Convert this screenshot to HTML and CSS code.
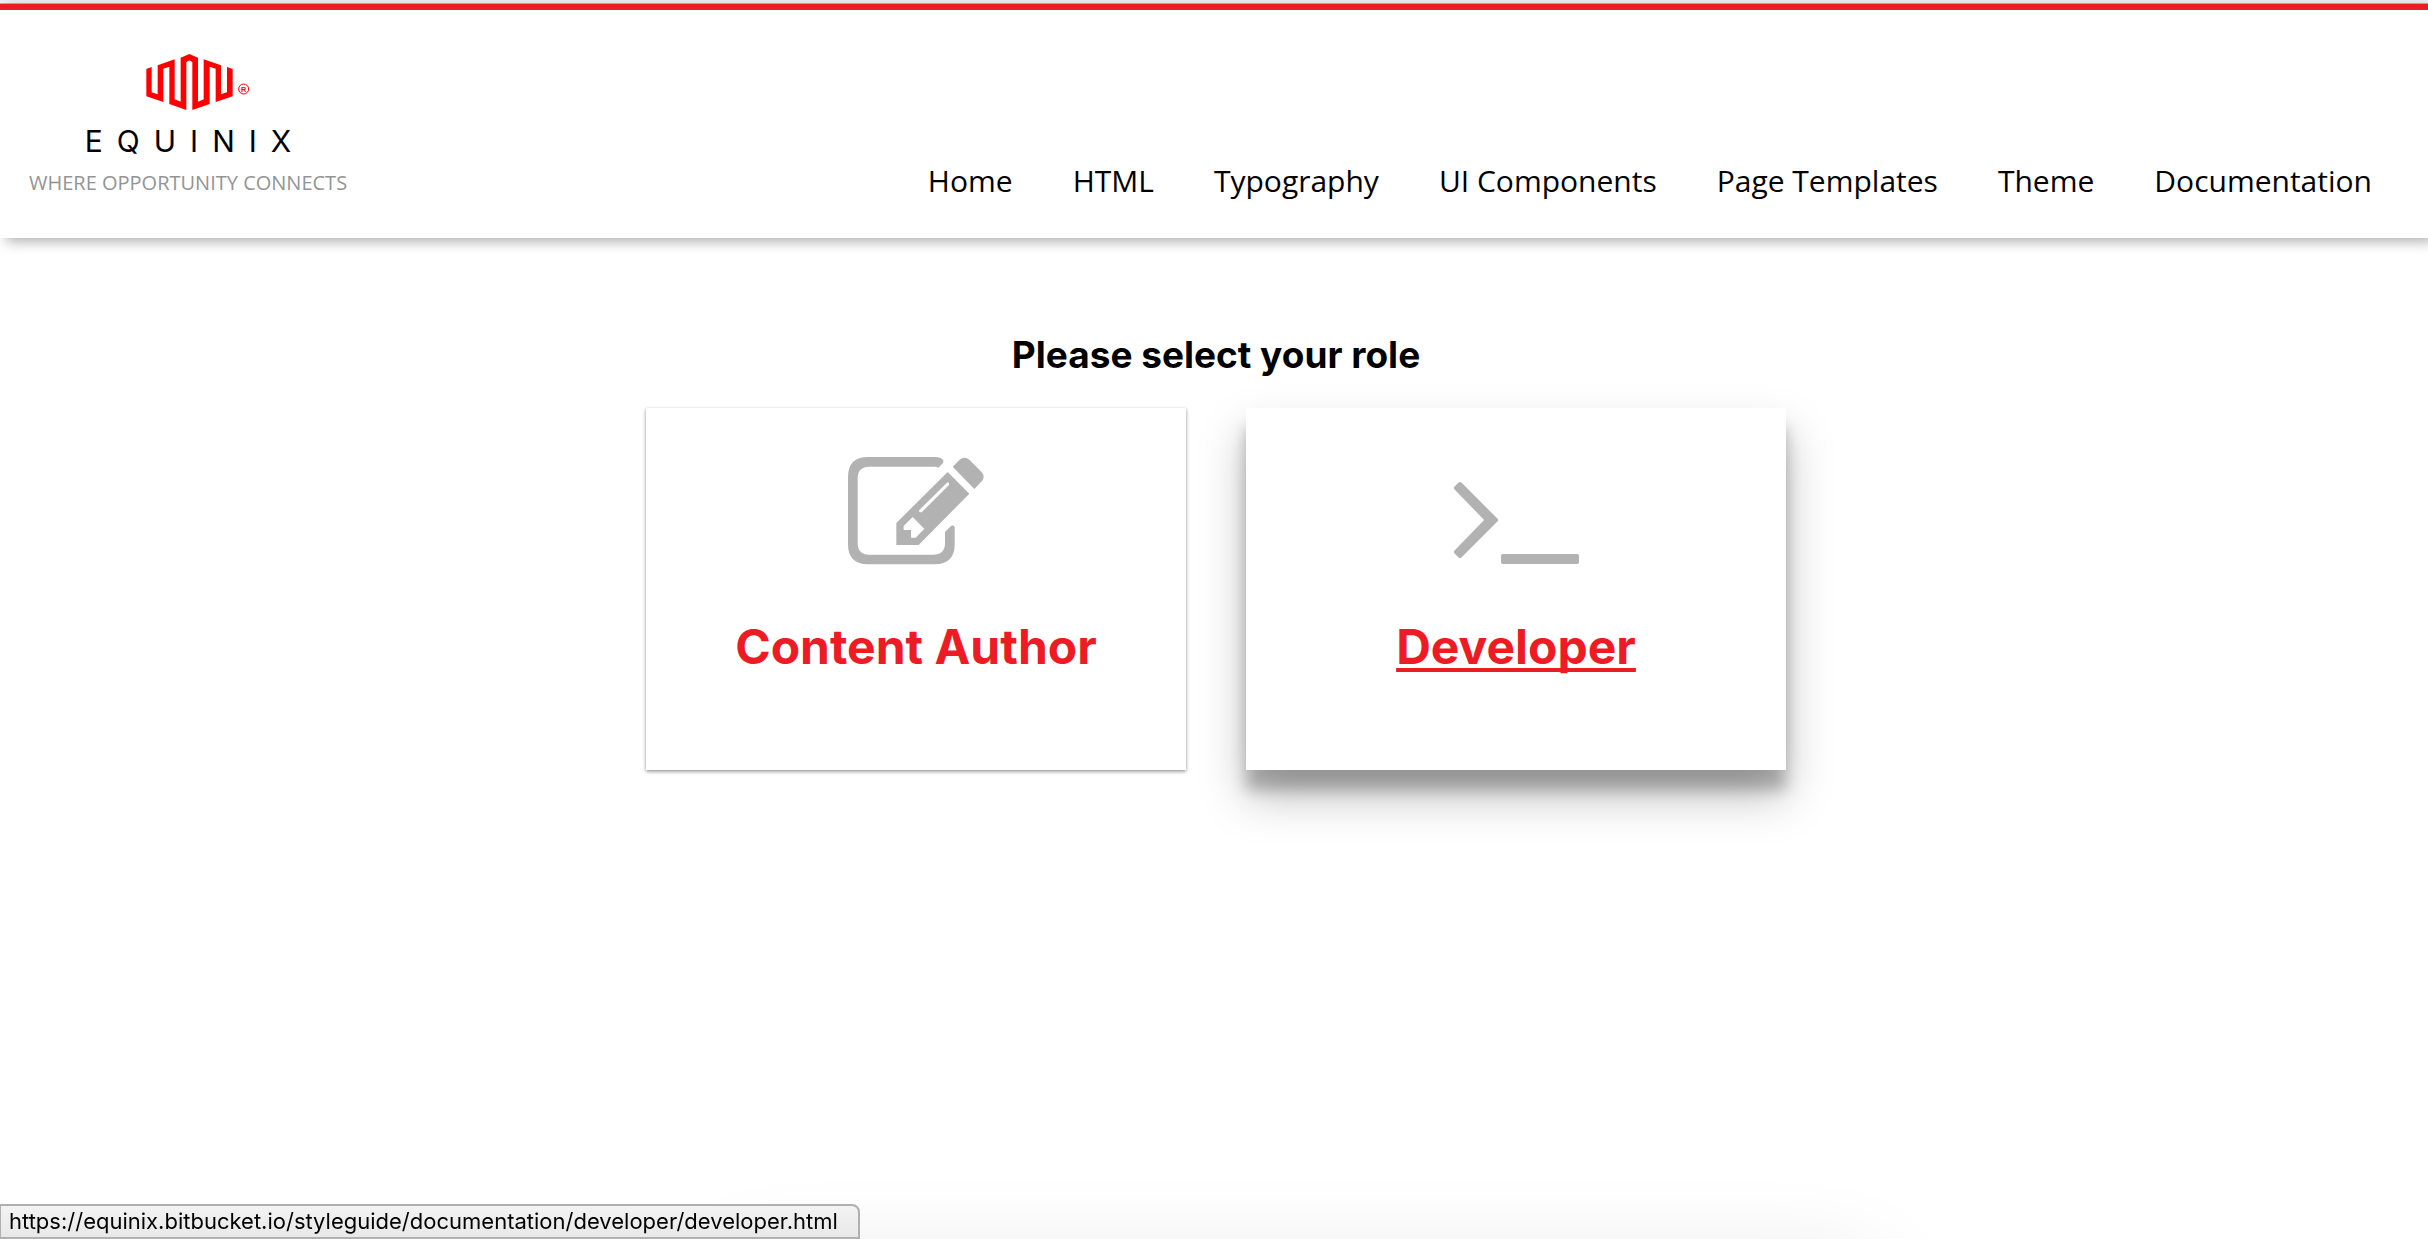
FILE: index.html
```html
<!DOCTYPE html>
<html lang="en">
<head>
<meta charset="utf-8">
<meta name="viewport" content="width=device-width, initial-scale=1">
<title>Equinix Style Guide</title>
<link rel="stylesheet" href="styles.css">
</head>
<body>
<div class="topline"></div>
<header class="header">
  <a class="brand" href="index.html">
    <svg class="brand-mark" viewBox="440 162 310 168" role="img" aria-label="Equinix logo">
      <path fill="#ff0000" d="M440 207L456 201V277L474 283V196L525 178V298L543 305V173L569 162L595 173V305L612 298V178L664 196V283L682 277V201L699 207V289L648 306V206L630 200V312L578 330V187Q569 176 560 187V330L509 312V200L491 206V306L440 289Z"/>
      <circle cx="732" cy="267" r="15" fill="none" stroke="#ff0000" stroke-width="3"/>
      <text class="brand-reg" x="732" y="275" text-anchor="middle">R</text>
    </svg>
    <span class="brand-name">EQUINIX</span>
    <span class="brand-tagline">WHERE OPPORTUNITY CONNECTS</span>
  </a>
  <nav class="nav">
    <a href="#home">Home</a>
    <a href="#html">HTML</a>
    <a href="#typography">Typography</a>
    <a href="#ui-components">UI Components</a>
    <a href="#page-templates">Page Templates</a>
    <a href="#theme">Theme</a>
    <a href="#documentation">Documentation</a>
  </nav>
</header>
<main class="main">
  <h1 class="heading">Please select your role</h1>
  <div class="roles">
    <a class="card" href="#author">
      <svg class="card-icon" viewBox="54 50 408 324" aria-hidden="true">
        <path d="M114 50H316Q332 50 340 60Q341 66 337 70L325 82Q321 79 314 79H118Q83 79 83 114V308Q83 343 118 343H310Q345 343 345 308V275L363 257Q370 253 374 260V312Q374 372 314 372H114Q54 372 54 312V110Q54 50 114 50Z"/>
        <path fill-rule="evenodd" d="M353 95L418 160L266 314H199V248ZM248 230L221 257V269H243V292H257L283 265ZM351 127L268 209Q265 217 275 216L357 134Q359 125 351 127Z"/>
        <path d="M368 79L389 58Q403 47 418 58L454 94Q467 107 456 122L433 146Z"/>
      </svg>
      <span class="card-title">Content Author</span>
    </a>
    <a class="card card-active" href="#developer">
      <svg class="card-icon" viewBox="0 0 136 108" aria-hidden="true">
        <path stroke="#b2b2b2" stroke-width="4" stroke-linejoin="round" d="M8 31L12 27L48 63L12 99L8 95L39 63Z"/>
        <rect x="53" y="97" width="78" height="10" rx="2"/>
      </svg>
      <span class="card-title">Developer</span>
    </a>
  </div>
</main>
<div class="floor-shadow"></div>
<div class="status">https://equinix.bitbucket.io/styleguide/documentation/developer/developer.html</div>
</body>
</html>
```
FILE: styles.css
```css
* {
  box-sizing: border-box;
}

body {
  margin: 0;
  min-height: 100vh;
  overflow-x: hidden;
  background: #fff;
  color: #000;
  font-family: "Open Sans", "Noto Sans", sans-serif;
}

a {
  color: inherit;
  text-decoration: none;
}

.topline {
  height: 4px;
  background: #f0f0f0;
  border-bottom: 1px solid #b4b4b4;
}

.header {
  display: flex;
  justify-content: space-between;
  align-items: flex-end;
  padding: 44px 56px 37px 29px;
  border-top: 6px solid #ed1c24;
  background: #fff;
  box-shadow: 6px 4px 12px rgba(0, 0, 0, 0.3);
}

.brand {
  display: flex;
  flex-direction: column;
  align-items: center;
}

.brand-mark {
  width: 104px;
  height: 56px;
  margin-left: 20px;
}

.brand-reg {
  font: bold 22px "Liberation Sans", sans-serif;
  fill: #ff0000;
}

.brand-name {
  margin-top: 13px;
  padding-left: 14px;
  font-family: Inter, sans-serif;
  font-size: 30px;
  line-height: 36px;
  letter-spacing: 14px;
}

.brand-tagline {
  margin-top: 6px;
  color: #949494;
  font-size: 20px;
  line-height: 36px;
}

.nav {
  display: flex;
  gap: 60px;
  font-size: 30px;
  line-height: 40px;
}

.main {
  display: flex;
  flex-direction: column;
  align-items: center;
  padding: 93px 0 64px 4px;
  font-family: Inter, sans-serif;
}

.heading {
  margin: 0;
  font-size: 37px;
  font-weight: 700;
  line-height: 48px;
}

.roles {
  display: grid;
  grid-template-columns: repeat(2, minmax(0, 540px));
  justify-content: center;
  gap: 60px;
  width: 100%;
  margin-top: 29px;
}

.card {
  display: flex;
  flex-direction: column;
  align-items: center;
  gap: 52px;
  padding: 49px 24px 93px;
  background: #fff;
  color: #ed1c24;
  box-shadow: 0 1px 3px rgba(0, 0, 0, 0.24), 0 2px 4px rgba(0, 0, 0, 0.24);
}

.card-active {
  box-shadow: 0 26px 44px rgba(0, 0, 0, 0.26), 0 20px 14px rgba(0, 0, 0, 0.24);
}

.card-icon {
  width: 136px;
  height: 108px;
  fill: #b2b2b2;
}

.card-title {
  font-size: 48px;
  font-weight: 700;
  line-height: 60px;
}

.card-active .card-title {
  text-decoration: underline;
  text-decoration-thickness: 4px;
  text-decoration-skip-ink: none;
  text-underline-offset: 4px;
}

/* Soft shade rising from the lower edge of the window */
.floor-shadow {
  position: fixed;
  left: 30%;
  right: 23%;
  bottom: -80px;
  height: 40px;
  box-shadow: 0 0 100px rgba(0, 0, 0, 0.2);
}

.status {
  position: fixed;
  left: 0;
  bottom: 0;
  padding: 0 20px 0 8px;
  border: 2px solid #b0b0b0;
  border-left-width: 1px;
  border-radius: 0 8px 0 0;
  background: linear-gradient(#f3f3f3, #e8e8e8);
  font-family: Inter, sans-serif;
  font-size: 22px;
  line-height: 31px;
}
```
